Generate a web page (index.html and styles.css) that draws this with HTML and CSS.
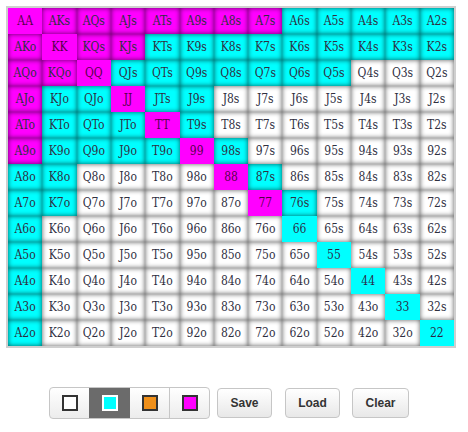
FILE: index.html
```html
<!DOCTYPE html>
<html>
<head>
<meta charset="utf-8">
<link rel="stylesheet" href="styles.css">
</head>
<body>
<div class="grid">
<div class="cell m p">AA</div><div class="cell m">AKs</div><div class="cell m">AQs</div><div class="cell m">AJs</div><div class="cell m">ATs</div><div class="cell m">A9s</div><div class="cell m">A8s</div><div class="cell m">A7s</div><div class="cell c">A6s</div><div class="cell c">A5s</div><div class="cell c">A4s</div><div class="cell c">A3s</div><div class="cell c">A2s</div>
<div class="cell m">AKo</div><div class="cell m p">KK</div><div class="cell m">KQs</div><div class="cell m">KJs</div><div class="cell c">KTs</div><div class="cell c">K9s</div><div class="cell c">K8s</div><div class="cell c">K7s</div><div class="cell c">K6s</div><div class="cell c">K5s</div><div class="cell c">K4s</div><div class="cell c">K3s</div><div class="cell c">K2s</div>
<div class="cell m">AQo</div><div class="cell m">KQo</div><div class="cell m p">QQ</div><div class="cell c">QJs</div><div class="cell c">QTs</div><div class="cell c">Q9s</div><div class="cell c">Q8s</div><div class="cell c">Q7s</div><div class="cell c">Q6s</div><div class="cell c">Q5s</div><div class="cell">Q4s</div><div class="cell">Q3s</div><div class="cell">Q2s</div>
<div class="cell m">AJo</div><div class="cell c">KJo</div><div class="cell c">QJo</div><div class="cell m p">JJ</div><div class="cell c">JTs</div><div class="cell c">J9s</div><div class="cell">J8s</div><div class="cell">J7s</div><div class="cell">J6s</div><div class="cell">J5s</div><div class="cell">J4s</div><div class="cell">J3s</div><div class="cell">J2s</div>
<div class="cell m">ATo</div><div class="cell c">KTo</div><div class="cell c">QTo</div><div class="cell c">JTo</div><div class="cell m p">TT</div><div class="cell c">T9s</div><div class="cell">T8s</div><div class="cell">T7s</div><div class="cell">T6s</div><div class="cell">T5s</div><div class="cell">T4s</div><div class="cell">T3s</div><div class="cell">T2s</div>
<div class="cell m">A9o</div><div class="cell c">K9o</div><div class="cell c">Q9o</div><div class="cell c">J9o</div><div class="cell c">T9o</div><div class="cell m p">99</div><div class="cell c">98s</div><div class="cell">97s</div><div class="cell">96s</div><div class="cell">95s</div><div class="cell">94s</div><div class="cell">93s</div><div class="cell">92s</div>
<div class="cell c">A8o</div><div class="cell c">K8o</div><div class="cell">Q8o</div><div class="cell">J8o</div><div class="cell">T8o</div><div class="cell">98o</div><div class="cell m p">88</div><div class="cell c">87s</div><div class="cell">86s</div><div class="cell">85s</div><div class="cell">84s</div><div class="cell">83s</div><div class="cell">82s</div>
<div class="cell c">A7o</div><div class="cell c">K7o</div><div class="cell">Q7o</div><div class="cell">J7o</div><div class="cell">T7o</div><div class="cell">97o</div><div class="cell">87o</div><div class="cell m p">77</div><div class="cell c">76s</div><div class="cell">75s</div><div class="cell">74s</div><div class="cell">73s</div><div class="cell">72s</div>
<div class="cell c">A6o</div><div class="cell">K6o</div><div class="cell">Q6o</div><div class="cell">J6o</div><div class="cell">T6o</div><div class="cell">96o</div><div class="cell">86o</div><div class="cell">76o</div><div class="cell c p">66</div><div class="cell">65s</div><div class="cell">64s</div><div class="cell">63s</div><div class="cell">62s</div>
<div class="cell c">A5o</div><div class="cell">K5o</div><div class="cell">Q5o</div><div class="cell">J5o</div><div class="cell">T5o</div><div class="cell">95o</div><div class="cell">85o</div><div class="cell">75o</div><div class="cell">65o</div><div class="cell c p">55</div><div class="cell">54s</div><div class="cell">53s</div><div class="cell">52s</div>
<div class="cell c">A4o</div><div class="cell">K4o</div><div class="cell">Q4o</div><div class="cell">J4o</div><div class="cell">T4o</div><div class="cell">94o</div><div class="cell">84o</div><div class="cell">74o</div><div class="cell">64o</div><div class="cell">54o</div><div class="cell c p">44</div><div class="cell">43s</div><div class="cell">42s</div>
<div class="cell c">A3o</div><div class="cell">K3o</div><div class="cell">Q3o</div><div class="cell">J3o</div><div class="cell">T3o</div><div class="cell">93o</div><div class="cell">83o</div><div class="cell">73o</div><div class="cell">63o</div><div class="cell">53o</div><div class="cell">43o</div><div class="cell c p">33</div><div class="cell">32s</div>
<div class="cell c">A2o</div><div class="cell">K2o</div><div class="cell">Q2o</div><div class="cell">J2o</div><div class="cell">T2o</div><div class="cell">92o</div><div class="cell">82o</div><div class="cell">72o</div><div class="cell">62o</div><div class="cell">52o</div><div class="cell">42o</div><div class="cell">32o</div><div class="cell c p">22</div>
</div>
<div class="toolbar">
  <div class="swatches">
    <div class="seg"><span class="sw sw-white"></span></div>
    <div class="seg active"><span class="sw sw-cyan"></span></div>
    <div class="seg"><span class="sw sw-orange"></span></div>
    <div class="seg"><span class="sw sw-magenta"></span></div>
  </div>
  <button class="btn btn-save">Save</button>
  <button class="btn btn-load">Load</button>
  <button class="btn btn-clear">Clear</button>
</div>
</body>
</html>
```

FILE: styles.css
```css
html, body {
  margin: 0;
  padding: 0;
  background: #fff;
}
body {
  padding: 6px 0 0 6px;
}
.grid {
  width: 446px;
  border: 2px solid #cfcfcf;
  display: grid;
  grid-template-columns: repeat(13, 1fr);
  grid-auto-rows: 26px;
}
.cell {
  background: #fff;
  box-shadow: inset 0 0 5px rgba(0, 0, 0, 0.65);
  display: flex;
  align-items: center;
  justify-content: center;
  font-family: "DejaVu Serif Condensed", "DejaVu Serif", "Liberation Serif", serif;
  font-size: 12px;
  color: #2f2f3f;
}
.cell.m {
  background: #ff00ff;
}
.cell.c {
  background: #00ffff;
}
.cell.p {
  box-shadow: none;
  color: rgba(50, 0, 30, 0.85);
}
.toolbar {
  display: flex;
  align-items: center;
  margin-top: 39px;
  padding-left: 43px;
}
.swatches {
  display: flex;
  height: 30px;
  border: 1px solid #c6c6c6;
  border-radius: 4px;
  overflow: hidden;
  background: linear-gradient(#ffffff, #ececec);
}
.seg {
  width: 39px;
  display: flex;
  align-items: center;
  justify-content: center;
  border-left: 1px solid #c6c6c6;
}
.seg:first-child {
  border-left: none;
}
.seg.active {
  background: #6b6b6b;
  border-left-color: #6b6b6b;
}
.seg.active + .seg {
  border-left-color: #6b6b6b;
}
.sw {
  width: 12px;
  height: 12px;
  border: 2px solid #333;
}
.sw-white { background: #fff; }
.sw-cyan { background: #00ffff; border-color: #fff; }
.sw-orange { background: #f0901a; }
.sw-magenta { background: #ff00ff; }
.btn {
  height: 30px;
  padding: 0 12px;
  border: 1px solid #c6c6c6;
  border-radius: 4px;
  background: linear-gradient(#ffffff, #e8e8e8);
  font-family: "Liberation Sans", Arial, sans-serif;
  font-weight: bold;
  font-size: 12px;
  color: #333;
}
.btn-save { margin-left: 7px; width: 55px; }
.btn-load { margin-left: 13px; width: 55px; }
.btn-clear { margin-left: 12px; width: 57px; }
```
